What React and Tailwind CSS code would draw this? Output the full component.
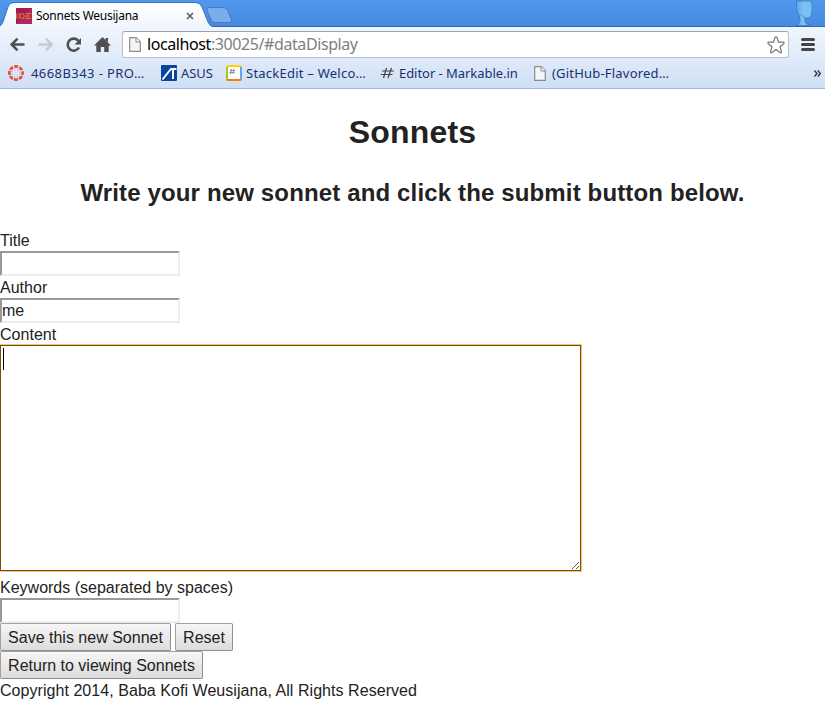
import React from "react";

const uiFont = "font-['Noto_Sans','Open_Sans',sans-serif]";
const inputClass =
  "block w-[180px] h-[25px] rounded-none border-2 border-t-[#999] border-l-[#999] border-r-[#eee] border-b-[#eee] bg-white p-0 text-[16px] leading-[21px] text-[#222] outline-none";
const labelClass = "h-[22px] leading-6 tracking-[0.02px]";
const buttonClass =
  "h-7 shrink-0 rounded-[2px] border border-[#a0a0a0] border-r-[#8f8f8f] border-b-[#8f8f8f] bg-linear-to-b from-[#f6f6f6] to-[#dcdcdc] p-0 text-center text-[16px] leading-[25px] text-[#222] whitespace-nowrap";

function PageIcon({ className }) {
  return (
    <svg className={className} width="12" height="15" viewBox="0 0 12 15">
      <path d="M.7.7H7.2L11.3 4.8V14.3H.7Z" fill="#f5f5f5" stroke="#8c8c8c" strokeWidth="1.2" />
      <path d="M7 .8V5h4.2" fill="#fff" stroke="#8c8c8c" />
    </svg>
  );
}

function TabStrip() {
  return (
    <div className="relative h-[27px] bg-linear-to-b from-[#5099ee] to-[#468ae0]">
      <svg className="absolute left-0 top-0" width="825" height="27" viewBox="0 0 825 27">
        <defs>
          <linearGradient id="tab" x1="0" y1="0" x2="0" y2="1">
            <stop offset="0" stopColor="#fff" />
            <stop offset="1" stopColor="#f1f6fd" />
          </linearGradient>
          <linearGradient id="person" x1="0" y1="0" x2="1" y2="0">
            <stop offset="0" stopColor="#5ca6e3" />
            <stop offset=".45" stopColor="#7dc1f6" />
            <stop offset="1" stopColor="#78bdf4" />
          </linearGradient>
        </defs>
        <path d="M0 26.5H825" stroke="#3467a5" />
        <path d="M0 27V26C2 25 3 22 4 19L8 7Q9.500 3 14 3H196Q200 3 202 7L208 22Q209.500 26 213 27Z" fill="url(#tab)" />
        <path d="M0 26C2 25 3 22 4 19L8 7Q9.500 2.500 14 2.500H196Q200 2.500 202 7L208 22Q209.500 26 213 26.500" fill="none" stroke="#3e73b4" />
        <path d="M209 7.500H223Q226.500 7.500 227.500 10L231.500 20Q232 22.500 230 22.500H215Q212 22.500 211 20L207 10Q206 7.500 209 7.500Z" fill="#79aeee" stroke="#4779bb" />
        <path d="M796.500 1H811.500Q812.500 6 812 11Q811.500 17.500 808 18Q805.500 18.300 804.500 17.500V21.500Q805 24 811 25.500H796Q800 24 800 20.500Q800 16 797.500 12Q796 9 796.500 1Z" fill="url(#person)" stroke="#397dc0" strokeWidth=".8" />
        <path d="M800.500 15Q803 15 804.500 18.500V22" fill="none" stroke="#559fde" strokeWidth="1" />
      </svg>
      <div className="relative flex h-[27px] items-start pl-4 pt-2">
        <svg width="16" height="16" viewBox="0 0 16 16">
          <rect width="16" height="16" fill="#a31b53" />
          <path d="M0 16L16 0V16Z" fill="#b02862" />
          <g fill="none" stroke="#e8802a" strokeWidth=".8">
            <path d="M.7 5V11M2.500 8L.7 8M2.300 5L4 8L2.300 11M9 5.500H15.500M9 10.500H15.500M8 8H12M12.500 5.500V10.500M4 5L5 6M8 5L7 6M4 11L5 10M8 11L7 10" />
            <circle cx="6" cy="8" r="2.100" />
          </g>
        </svg>
        <span className={uiFont + " ml-1 w-[150px] text-[12px] leading-4 tracking-[-0.25px] text-black whitespace-nowrap"}>
          Sonnets Weusijana
        </span>
        <svg className="mt-1" width="8" height="8" viewBox="0 0 8 8">
          <path d="M1 1L7 7M7 1L1 7" stroke="#606060" strokeWidth="1.700" />
        </svg>
      </div>
    </div>
  );
}

function Toolbar() {
  return (
    <div className="flex h-[31px] items-start pt-1">
      <svg className="shrink-0" width="122" height="27" viewBox="0 31 122 27">
        <g fill="none" strokeWidth="2.600">
          <path d="M24.500 44.500H12.500M17.500 38.700L11.700 44.500L17.500 50.300" stroke="#505050" />
          <path d="M38.500 44.500H51M46 38.700L51.800 44.500L46 50.300" stroke="#c6ccd5" />
          <path d="M78.500 41A6 6 0 1 0 79 47.500" stroke="#505050" />
        </g>
        <path d="M81 38V44.500H74.500Z" fill="#505050" />
        <path d="M102.500 37L111 45.500H108.700V52H104.200V47H100.800V52H96.300V45.500H94L98 41.500L102.500 37ZM105.500 38H108V42L105.500 40Z" fill="#505050" />
      </svg>
      <div className="flex h-[27px] w-[667px] shrink-0 items-center rounded-[3px] border border-[#b4bfd0] border-t-[#98a4b2] bg-white">
        <PageIcon className="ml-[6px] shrink-0" />
        <div className={uiFont + " mb-[2px] ml-[6px] w-[619px] text-[16px] leading-6 tracking-[-0.41px] text-[#808080] whitespace-nowrap"}>
          <span className="text-black">localhost</span>:30025/#dataDisplay
        </div>
        <svg className="shrink-0" width="20" height="20" viewBox="0 0 20 20">
          <path d="M10 1.800Q10.800 1.800 11 2.600L12.500 7.200H17Q19 7.500 17.500 9L14 11.700L15.500 16.500Q15.500 18.300 14 17.400L10 14.500L6 17.400Q4.500 18.300 4.500 16.500L6 11.700L2.500 9Q1 7.500 3 7.200H7.500L9 2.600Q9.200 1.800 10 1.800Z" fill="#fff" stroke="#777" strokeWidth="1.200" />
        </svg>
      </div>
      <svg className="ml-3 mt-[7px]" width="14" height="14" viewBox="0 0 14 14">
        <path d="M1.500 1.500H12.500M1.500 6.500H12.500M1.500 11.500H12.500" stroke="#454545" strokeWidth="3" strokeLinecap="round" />
      </svg>
    </div>
  );
}

function BookmarksBar() {
  return (
    <div className={uiFont + " flex h-[30px] items-center text-[13px] leading-5 text-[#16326f] whitespace-nowrap"}>
      <div className="flex w-[153px] items-center pl-2">
        <svg className="mr-[7px] shrink-0" width="16" height="16" viewBox="0 0 16 16">
          <circle cx="8" cy="8" r="6.600" fill="none" stroke="#e64a35" strokeWidth="2.600" strokeDasharray="3.900 1.284" strokeDashoffset="1.950" />
          <circle cx="8" cy="8" r="4.200" fill="none" stroke="#e64a35" strokeWidth=".8" strokeDasharray=".8 2.499" strokeDashoffset="2" />
        </svg>
        <span className="tracking-[0.42px]">4668B343 - PRO…</span>
      </div>
      <div className="flex w-[65px] items-center pl-2">
        <svg className="mr-1 shrink-0" width="16" height="16" viewBox="0 0 16 16">
          <rect width="16" height="16" rx="1" fill="#08459c" />
          <path d="M1.500 14.500L9.500 4.500" stroke="#fff" strokeWidth="2" />
          <path d="M9.500 3H15.500V5H13V14H11V5H8.500Z" fill="#fff" />
        </svg>
        <span className="tracking-[-0.1px]">ASUS</span>
      </div>
      <div className="flex w-[154px] items-center pl-2">
        <svg className="mr-1 shrink-0" width="16" height="16" viewBox="0 0 16 16">
          <rect x="1" y="1" width="14" height="14" rx="1" fill="#fff" />
          <path d="M0 2Q0 0 2 0H14Q16 0 16 2L14 2H2Z" fill="#ffd500" />
          <path d="M0 2L2 2V14L0 14Z" fill="#9dcc20" />
          <path d="M14 2H16V14H14Z" fill="#55a9ff" />
          <path d="M0 14H16Q16 16 14 16H2Q0 16 0 14Z" fill="#ff7900" />
          <path d="M5.500 4L4.500 9M8 4L7 9M4 5.500H9M3.500 7.500H8.500" stroke="#777" strokeWidth=".8" />
        </svg>
        <span className="tracking-[0.24px]">StackEdit – Welco…</span>
      </div>
      <div className="flex w-[153px] items-center pl-2">
        <svg className="mr-[3px] shrink-0" width="16" height="16" viewBox="0 0 16 16">
          <path d="M6.500 3L3.500 13M11.500 3L8 13M2 6H14M.8 9.500H12.500" stroke="#444" strokeWidth="1.200" fill="none" />
        </svg>
        <span className="tracking-[-0.05px]">Editor - Markable.in</span>
      </div>
      <div className="flex w-[280px] items-center pl-[9px]">
        <PageIcon className="mr-[6px] shrink-0" />
        <span className="tracking-[0.2px]">(GitHub-Flavored…</span>
      </div>
      <svg className="ml-[9px]" width="7" height="7" viewBox="0 0 7 7">
        <path d="M.5.5L3 3.500L.5 6.500M3.800.5L6.300 3.500L3.800 6.500" fill="none" stroke="#333" strokeWidth="1.300" />
      </svg>
    </div>
  );
}

export default function App() {
  return (
    <div className="flex h-[710px] w-[825px] flex-col overflow-hidden bg-white">
      <TabStrip />
      <div className="h-[62px] shrink-0 border-b border-[#9fb6d8] bg-linear-to-b from-[#f1f6fd] to-[#cfdff5]">
        <Toolbar />
        <BookmarksBar />
      </div>
      <main className="font-['Liberation_Sans',Arial,sans-serif] text-[16px] text-[#222]">
        <h1 className="mt-6 h-10 text-center text-[32px] font-bold leading-[38px] tracking-[0.2px]">Sonnets</h1>
        <h2 className="mt-5 h-14 text-center text-[24px] font-bold leading-10 tracking-[0.145px]">
          Write your new sonnet and click the submit button below.
        </h2>
        <form className="flex flex-col items-start" onSubmit={(e) => e.preventDefault()}>
          <label className={labelClass}>Title</label>
          <input className={inputClass} />
          <label className={labelClass}>Author</label>
          <input className={inputClass} defaultValue="me" />
          <label className={labelClass}>Content</label>
          <div className="flex h-[226px] w-[581px] items-start justify-between border border-[#7a4b00] bg-white shadow-[0_0_0_1px_#f0c681]">
            <div className="ml-[2px] mt-[2px] h-[22px] w-px bg-black" />
            <svg className="self-end" width="10" height="10" viewBox="0 0 10 10" shapeRendering="crispEdges">
              <path d="M2 9L9 2M6 9L9 6" stroke="#555" fill="none" />
            </svg>
          </div>
          <label className="mt-[5px] h-[22px] leading-6">Keywords (separated by spaces)</label>
          <input className={inputClass} />
          <div className="flex gap-1">
            <button className={buttonClass + " w-[171px]"}>Save this new Sonnet</button>
            <button className={buttonClass + " w-[58px]"}>Reset</button>
          </div>
          <button className={buttonClass + " w-[203px]"}>Return to viewing Sonnets</button>
        </form>
        <p className="leading-6 tracking-[0.05px]">Copyright 2014, Baba Kofi Weusijana, All Rights Reserved</p>
      </main>
    </div>
  );
}
